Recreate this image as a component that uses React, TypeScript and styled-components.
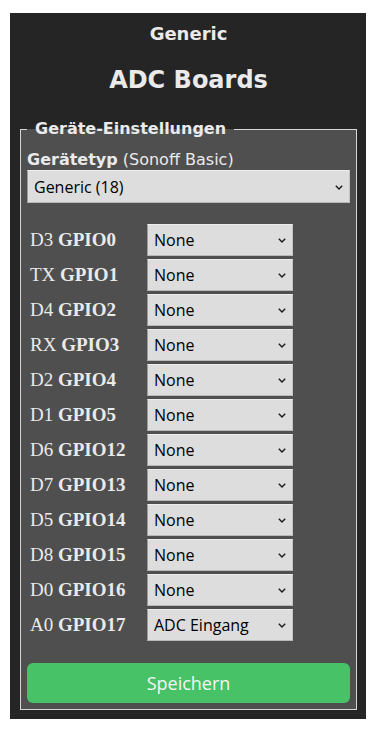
import React from 'react';
import styled, { createGlobalStyle } from 'styled-components';

const GlobalStyle = createGlobalStyle`
  html, body {
    margin: 0;
    padding: 0;
    background: #ffffff;
  }
`;

const Page = styled.div`
  padding: 13px 10px 10px 10px;
`;

const Panel = styled.div`
  background: #252525;
  padding: 0 9px 9px 10px;
  color: #eaeaea;
  font-family: "DejaVu Sans", Verdana, sans-serif;
`;

const SubTitle = styled.div`
  margin: 0;
  padding-top: 10px;
  font-size: 18px;
  line-height: 22px;
  font-weight: bold;
  text-align: center;
`;

const Title = styled.div`
  margin-top: 20px;
  font-size: 24px;
  line-height: 30px;
  font-weight: bold;
  text-align: center;
`;

const Fieldset = styled.fieldset`
  margin: 24px 0 0 0;
  padding: 0 6px 6px 6px;
  border: 1px solid #d6d6d6;
  background: #4f4f4f;
  min-width: 0;
`;

const Legend = styled.legend`
  padding: 0 8px;
  margin-left: 0;
  font-size: 16px;
  line-height: 20px;
  font-weight: bold;
  color: #eaeaea;
`;

const TypeLabel = styled.div`
  margin-top: 11px;
  font-size: 16px;
  line-height: 20px;
  color: #eaeaea;

  b {
    font-weight: bold;
  }
`;

const SelectWrap = styled.div<{ $width?: number }>`
  position: relative;
  width: ${p => (p.$width ? `${p.$width}px` : '100%')};
`;

const Select = styled.select<{ $height: number }>`
  appearance: none;
  -webkit-appearance: none;
  display: block;
  width: 100%;
  height: ${p => p.$height}px;
  margin: 0;
  padding: 0 20px 0 6px;
  border: 1px solid;
  border-color: #ececec #c4c4c4 #b8b8b8 #9c9c9c;
  border-radius: 0;
  background: #dddddd;
  color: #000000;
  font-family: "Open Sans", "Noto Sans", sans-serif;
  font-size: 16px;
  outline: none;
`;

const Chevron = styled.svg`
  position: absolute;
  right: 7px;
  top: 50%;
  width: 8px;
  height: 5px;
  margin-top: -2px;
  pointer-events: none;
`;

const PinList = styled.div`
  margin-top: 21px;
  display: flex;
  flex-direction: column;
  gap: 3px;
`;

const PinRow = styled.div`
  display: flex;
  align-items: center;
  height: 32px;
`;

const PinLabel = styled.div`
  width: 120px;
  padding-left: 3px;
  box-sizing: border-box;
  font-family: "Liberation Serif", "Times New Roman", serif;
  font-size: 19px;
  color: #eaeaea;
  white-space: nowrap;

  b {
    font-weight: bold;
  }
`;

const SaveButton = styled.button`
  display: block;
  width: 100%;
  height: 40px;
  margin-top: 22px;
  border: none;
  border-radius: 6px;
  background: #47c266;
  color: #f6f6f6;
  font-family: "Open Sans", "Noto Sans", sans-serif;
  font-size: 18px;
  cursor: pointer;
`;

const pins = [
  { pin: 'D3', gpio: 'GPIO0', value: 'None' },
  { pin: 'TX', gpio: 'GPIO1', value: 'None' },
  { pin: 'D4', gpio: 'GPIO2', value: 'None' },
  { pin: 'RX', gpio: 'GPIO3', value: 'None' },
  { pin: 'D2', gpio: 'GPIO4', value: 'None' },
  { pin: 'D1', gpio: 'GPIO5', value: 'None' },
  { pin: 'D6', gpio: 'GPIO12', value: 'None' },
  { pin: 'D7', gpio: 'GPIO13', value: 'None' },
  { pin: 'D5', gpio: 'GPIO14', value: 'None' },
  { pin: 'D8', gpio: 'GPIO15', value: 'None' },
  { pin: 'D0', gpio: 'GPIO16', value: 'None' },
  { pin: 'A0', gpio: 'GPIO17', value: 'ADC Eingang' },
];

function ArrowDown() {
  return (
    <Chevron viewBox="0 0 8 5">
      <path d="M0.8 0.8 L4 4 L7.2 0.8" fill="none" stroke="#1a1a1a" strokeWidth="1.4" />
    </Chevron>
  );
}

function Dropdown({ value, width, height }: { value: string; width?: number; height: number }) {
  return (
    <SelectWrap $width={width}>
      <Select $height={height} defaultValue={value}>
        <option value={value}>{value}</option>
      </Select>
      <ArrowDown />
    </SelectWrap>
  );
}

export default function App() {
  return (
    <>
      <GlobalStyle />
      <Page>
        <Panel>
          <SubTitle>Generic</SubTitle>
          <Title>ADC Boards</Title>
          <Fieldset>
            <Legend>Geräte-Einstellungen</Legend>
            <TypeLabel>
              <b>Gerätetyp</b> (Sonoff Basic)
            </TypeLabel>
            <Dropdown value="Generic (18)" height={33} />
            <PinList>
              {pins.map(p => (
                <PinRow key={p.gpio}>
                  <PinLabel>
                    {p.pin} <b>{p.gpio}</b>
                  </PinLabel>
                  <Dropdown value={p.value} width={146} height={32} />
                </PinRow>
              ))}
            </PinList>
            <SaveButton>Speichern</SaveButton>
          </Fieldset>
        </Panel>
      </Page>
    </>
  );
}
